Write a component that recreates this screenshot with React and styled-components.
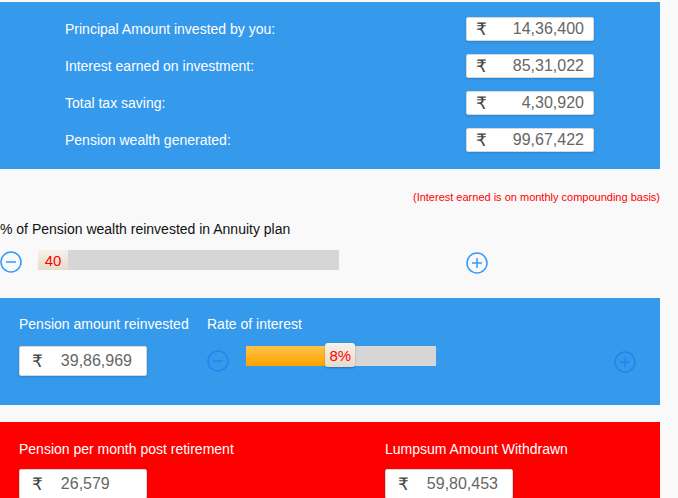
import * as React from 'react'
import styled, { createGlobalStyle } from 'styled-components'

const GlobalStyle = createGlobalStyle`
    body {
        margin: 0;
        background: #f9f9f9;
        font-family: 'Liberation Sans', Arial, sans-serif;
    }
`

const Page = styled.div`
    width: 660px;
    padding-top: 2px;
`

/* panels */
const Panel = styled.section`
    background: ${p => p.$red ? '#ff0000' : '#3599ec'};
    color: #fff;
`
const SummaryPanel = styled(Panel)`
    display: grid;
    grid-template-columns: 401px 128px;
    row-gap: 13px;
    padding: 15px 0 17px 65px;
    align-items: center;
`
const Label = styled.div`
    font-size: 14px;
    color: #fff;
`
const ValueBox = styled.div`
    display: flex;
    align-items: center;
    justify-content: space-between;
    box-sizing: border-box;
    width: 128px;
    height: ${p => p.$tall ? '30px' : '24px'};
    padding: 0 9px 0 ${p => p.$tall ? '12px' : '9px'};
    background: #fff;
    border: 1px solid #d8d8d8;
    border-radius: 2px;
    box-shadow: 0 1px 2px rgba(0,0,0,0.15);
    color: #666;
    font-size: 16px;
`
const Rupee = styled.span`
    font-family: 'DejaVu Sans', 'Noto Sans', sans-serif;
    font-size: 17px;
    line-height: 1;
    color: #444;
`
const Amount = styled.span`
    flex: 1;
    text-align: ${p => p.$left ? 'left' : 'right'};
    padding-left: ${p => p.$left ? '18px' : '0'};
`

/* middle */
const Note = styled.div`
    margin-top: 22px;
    text-align: right;
    font-size: 11px;
    color: #ff0000;
`
const Heading = styled.div`
    margin-top: 18px;
    font-size: 14px;
    color: #111;
`
const SliderRow = styled.div`
    display: flex;
    align-items: center;
    height: 22px;
    margin: 12px 0 27px;
`
const Track = styled.div`
    position: relative;
    width: ${p => p.$width}px;
    height: 20px;
    margin-left: 16px;
    background: #d6d6d6;
`
const Fill = styled.div`
    height: 100%;
    background: linear-gradient(#ffc34a, #ffa300);
`
const Handle = styled.div`
    position: absolute;
    top: ${p => p.$big ? '-3px' : '0'};
    display: flex;
    align-items: center;
    justify-content: center;
    width: 30px;
    height: ${p => p.$big ? '24px' : '20px'};
    background: linear-gradient(#f7f1e8, #e6dccd);
    border-radius: ${p => p.$big ? '3px' : '0'};
    box-shadow: ${p => p.$big ? '0 1px 2px rgba(0,0,0,0.25)' : 'none'};
    color: #ff0000;
    font-size: 15px;
`
const IconButton = styled.span`
    display: inline-flex;
    margin-left: ${p => p.$gap || 0}px;
    margin-top: ${p => p.$drop || 0}px;
`

/* bottom panels */
const ControlPanel = styled(Panel)`
    display: grid;
    grid-template-columns: 188px 1fr;
    row-gap: 14px;
    padding: 18px 0 29px 19px;
`
const ResultPanel = styled(Panel)`
    display: grid;
    grid-template-columns: 366px 1fr;
    align-content: start;
    row-gap: 12px;
    margin-top: 17px;
    padding: 19px 0 0 19px;
    height: 76px;
    overflow: hidden;
`
const Controls = styled.div`
    display: flex;
    align-items: center;
    height: 30px;
    & > ${Track} { margin-left: 17px; margin-top: -10px; }
`

const CircleIcon = ({ plus, size = 22, color = '#3399ff' }) => (
    <svg width={size} height={size} viewBox="0 0 22 22" fill="none" stroke={color} strokeWidth="1.5">
        <circle cx="11" cy="11" r="10" />
        <line x1="6" y1="11" x2="16" y2="11" />
        {plus && <line x1="11" y1="6" x2="11" y2="16" />}
    </svg>
)

const Money = ({ value, tall, left }) => (
    <ValueBox $tall={tall}>
        <Rupee>₹</Rupee>
        <Amount $left={left}>{value}</Amount>
    </ValueBox>
)

const summary = [
    ['Principal Amount invested by you:', '14,36,400'],
    ['Interest earned on investment:', '85,31,022'],
    ['Total tax saving:', '4,30,920'],
    ['Pension wealth generated:', '99,67,422'],
]

export default function App() {
    const rate = 8
    const fillPct = 84 / 190 * 100
    return (
        <Page>
            <GlobalStyle />
            <SummaryPanel>
                {summary.map(([label, value]) => (
                    <React.Fragment key={label}>
                        <Label>{label}</Label>
                        <Money value={value} />
                    </React.Fragment>
                ))}
            </SummaryPanel>

            <Note>(Interest earned is on monthly compounding basis)</Note>
            <Heading>% of Pension wealth reinvested in Annuity plan</Heading>
            <SliderRow>
                <IconButton $drop={3}><CircleIcon /></IconButton>
                <Track $width={301}>
                    <Handle>40</Handle>
                </Track>
                <IconButton $gap={127} $drop={6}><CircleIcon plus /></IconButton>
            </SliderRow>

            <ControlPanel>
                <Label>Pension amount reinvested</Label>
                <Label>Rate of interest</Label>
                <Money value="39,86,969" tall left />
                <Controls>
                    <CircleIcon color="#1f86ec" />
                    <Track $width={190}>
                        <Fill style={{ width: `${fillPct}%` }} />
                        <Handle $big style={{ left: `${fillPct - 2.5}%` }}>{rate}%</Handle>
                    </Track>
                    <IconButton $gap={178} $drop={2}><CircleIcon plus color="#1f86ec" /></IconButton>
                </Controls>
            </ControlPanel>

            <ResultPanel $red>
                <Label>Pension per month post retirement</Label>
                <Label>Lumpsum Amount Withdrawn</Label>
                <Money value="26,579" tall left />
                <Money value="59,80,453" tall left />
            </ResultPanel>
        </Page>
    )
}
